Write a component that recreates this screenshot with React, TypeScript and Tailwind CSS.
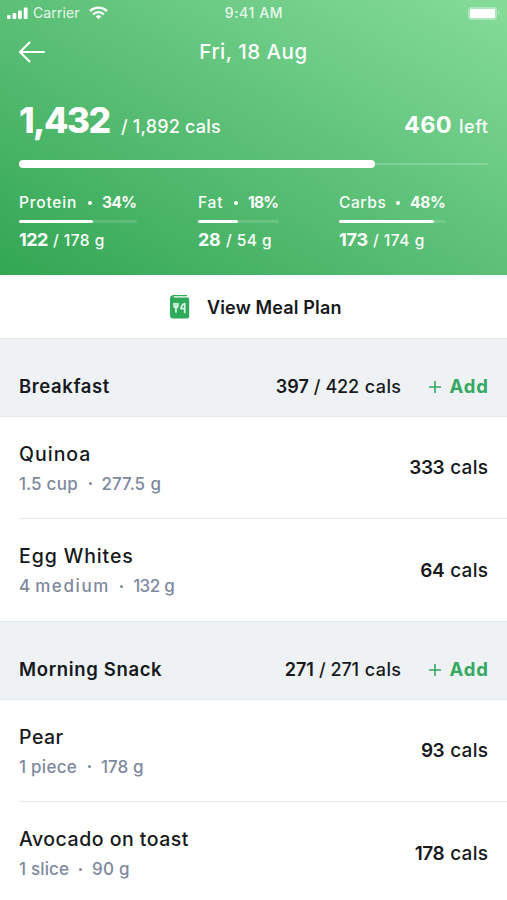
type Macro = {
  name: string;
  percent: string;
  value: string;
  goal: string;
  box: string;
  track: string;
  progress: number;
  nameClass: string;
  percentClass: string;
  valueClass: string;
  goalClass: string;
};

type Food = {
  name: string;
  nameClass: string;
  amount: string;
  unit: string;
  unitClass: string;
  grams: string;
  gramsClass: string;
  cals: string;
};

type Meal = {
  name: string;
  nameClass: string;
  eaten: string;
  goal: string;
  foods: Food[];
};

const macros: Macro[] = [
  {
    name: "Protein",
    percent: "34%",
    value: "122",
    goal: "178 g",
    box: "w-[179px]",
    track: "w-[118px]",
    progress: 63,
    nameClass: "w-[59px] tracking-[0.8px]",
    percentClass: "tracking-[-0.6px]",
    valueClass: "w-[29px] tracking-[-0.5px]",
    goalClass: "tracking-[0.5px]",
  },
  {
    name: "Fat",
    percent: "18%",
    value: "28",
    goal: "54 g",
    box: "w-[141px]",
    track: "w-[81px]",
    progress: 49,
    nameClass: "w-[26px] tracking-[0.8px]",
    percentClass: "tracking-[-0.7px]",
    valueClass: "w-[23px] tracking-[-0.3px]",
    goalClass: "tracking-[0.5px]",
  },
  {
    name: "Carbs",
    percent: "48%",
    value: "173",
    goal: "174 g",
    box: "w-[149px]",
    track: "w-[107px]",
    progress: 89,
    nameClass: "w-[47px] tracking-[0.6px]",
    percentClass: "tracking-[-0.3px]",
    valueClass: "w-[29px] tracking-[-0.2px]",
    goalClass: "tracking-[0.6px]",
  },
];

const meals: Meal[] = [
  {
    name: "Breakfast",
    nameClass: "tracking-[0.6px]",
    eaten: "397",
    goal: "422",
    foods: [
      {
        name: "Quinoa",
        nameClass: "tracking-[1px]",
        amount: "1.5",
        unit: "cup",
        unitClass: "w-[32px] tracking-[0.4px]",
        grams: "277.5",
        gramsClass: "w-[45px] tracking-[0px]",
        cals: "333",
      },
      {
        name: "Egg Whites",
        nameClass: "tracking-[0.9px]",
        amount: "4",
        unit: "medium",
        unitClass: "w-[75px] tracking-[1.6px]",
        grams: "132",
        gramsClass: "w-[27px] tracking-[-0.6px]",
        cals: "64",
      },
    ],
  },
  {
    name: "Morning Snack",
    nameClass: "tracking-[0.65px]",
    eaten: "271",
    goal: "271",
    foods: [
      {
        name: "Pear",
        nameClass: "tracking-[0.5px]",
        amount: "1",
        unit: "piece",
        unitClass: "w-[47px] tracking-[0.3px]",
        grams: "178",
        gramsClass: "w-[28px] tracking-[-0.1px]",
        cals: "93",
      },
      {
        name: "Avocado on toast",
        nameClass: "tracking-[0.5px]",
        amount: "1",
        unit: "slice",
        unitClass: "w-[38px] tracking-[0.1px]",
        grams: "90",
        gramsClass: "w-[23px] tracking-[0.3px]",
        cals: "178",
      },
    ],
  },
];

function StatusBar() {
  return (
    <div className="grid h-[26px] grid-cols-3 items-center pr-[8px] pl-[7px] text-[14px] leading-none text-white/85">
      <div className="flex items-center">
        <svg width="21" height="12" viewBox="0 0 21 12" fill="white">
          <rect x="0" y="8" width="3.6" height="4" rx="1" />
          <rect x="5.5" y="6" width="3.8" height="6" rx="1" />
          <rect x="11" y="3.5" width="3.8" height="8.5" rx="1" />
          <rect x="16.8" y="0.5" width="3.8" height="11.5" rx="1" />
        </svg>
        <span className="ml-[5px] w-[47px] tracking-[0.1px]">Carrier</span>
        <svg className="ml-[9px]" width="19" height="14" viewBox="0 0 19 14" fill="none" stroke="white" strokeWidth="2.3">
          <path d="M1 5.1C5.8.5 13.2.5 18 5.1" />
          <path d="M4.1 8.3c3-2.9 7.8-2.9 10.8 0" />
          <path d="M9.5 13.2 6.6 10.3c1.6-1.5 4.2-1.5 5.8 0Z" fill="white" stroke="none" />
        </svg>
      </div>
      <span className="pl-[2px] text-center font-medium tracking-[0.6px]">9:41 AM</span>
      <div className="flex items-center justify-end gap-[1px]">
        <div className="rounded-[3px] bg-white/35 p-[2px]">
          <div className="h-[9px] w-[25px] rounded-[1px] bg-white" />
        </div>
        <div className="h-[4px] w-[1.5px] rounded-r bg-white/40" />
      </div>
    </div>
  );
}

function MacroColumn({ macro }: { macro: Macro }) {
  return (
    <div className={macro.box}>
      <div className="flex h-[20px] items-center text-[15.5px] font-medium">
        <span className={macro.nameClass}>{macro.name}</span>
        <span className="mx-[10px] size-[4px] rounded-full bg-white" />
        <span className={`font-bold ${macro.percentClass}`}>{macro.percent}</span>
      </div>
      <div className={`mt-[7px] h-[3px] rounded-full bg-white/15 ${macro.track}`}>
        <div className="h-full rounded-full bg-white" style={{ width: `${macro.progress}%` }} />
      </div>
      <div className="mt-[3px] flex h-[22px] items-baseline text-[15.5px] font-medium">
        <span className={`text-[18px] font-bold ${macro.valueClass}`}>{macro.value}</span>
        <span className="mx-[5px]">/</span>
        <span className={macro.goalClass}>{macro.goal}</span>
      </div>
    </div>
  );
}

function Summary() {
  return (
    <header className="h-[275px] bg-[linear-gradient(to_top_right,#32a653,#5cc077_50%,#85dc99)] text-white">
      <StatusBar />
      <div className="grid h-[52px] grid-cols-[1fr_auto_1fr] items-center px-[19px]">
        <svg width="27" height="22" viewBox="0 0 27 22" fill="none" stroke="white" strokeWidth="2" strokeLinecap="round" strokeLinejoin="round">
          <path d="M25 11H1M10.5 1.5 1 11l9.5 9.5" />
        </svg>
        <span className="pt-[1px] text-[20.5px] font-medium tracking-[0.5px]">Fri, 18 Aug</span>
      </div>
      <div className="mt-[21px] flex h-[44px] items-baseline px-[19px] text-[18px] font-medium">
        <span className="w-[92px] text-[35.5px] leading-[44px] font-extrabold tracking-[-1.6px]">1,432</span>
        <span className="ml-[10px] tracking-[0.2px]">/ 1,892 cals</span>
        <span className="ml-auto text-[23.5px] font-bold tracking-[0.4px]">460</span>
        <span className="mr-[-0.5px] ml-[7px] tracking-[0.5px]">left</span>
      </div>
      <div className="mx-[19px] mt-[17px] flex h-[8px] items-center">
        <div className="h-[8px] w-[356px] rounded-full bg-white" />
        <div className="h-[2px] flex-1 rounded-r-full bg-white/20" />
      </div>
      <div className="mt-[25px] flex pl-[19px]">
        {macros.map((macro) => (
          <MacroColumn key={macro.name} macro={macro} />
        ))}
      </div>
    </header>
  );
}

function MealPlanLink() {
  return (
    <button className="flex h-[63px] w-full items-center pt-[1px] pl-[170px] text-[18px] font-semibold">
      <svg width="20" height="24" viewBox="0 0 20 24" fill="none">
        <path d="M3.5 0H17v1.3H4.2c-.8 0-.8 1.1 0 1.1H17.5c1 0 1.7.7 1.7 1.7V21.5c0 1.2-.8 2-2 2H3c-1.700 0-3-1.200-3-3V3.500C0 1.500 1.500 0 3.500 0Z" fill="#2fa95b" />
        <path d="M4 8.500v2c0 1.300.8 2 1.900 2s2-.7 2-2v-2M5.950 8.500v8.500M14.700 17.500V8.500c-2.300 1.100-3.700 3-3.700 5.200h3.700" stroke="#d9f5e2" strokeWidth="1.700" strokeLinecap="round" strokeLinejoin="round" />
      </svg>
      <span className="ml-[17px] tracking-[0.15px]">View Meal Plan</span>
    </button>
  );
}

function FoodRow({ food, last }: { food: Food; last: boolean }) {
  return (
    <div className={`ml-[19px] flex h-[102px] items-center justify-between pt-[1px] pr-[19px] ${last ? "" : "border-b border-[#e8eaed]"}`}>
      <div>
        <div className={`text-[19.5px] leading-[26px] font-[450] ${food.nameClass}`}>{food.name}</div>
        <div className="mt-[5px] flex items-center text-[17px] leading-[24px] font-[450] text-[#7e899e]">
          <span className="font-medium">{food.amount}</span>
          <span className={`ml-[5px] ${food.unitClass}`}>{food.unit}</span>
          <span className="mx-[10px] size-[3px] rounded-full bg-[#7e899e]" />
          <span className={`font-medium ${food.gramsClass}`}>{food.grams}</span>
          <span className="ml-[4px]">g</span>
        </div>
      </div>
      <div className="flex gap-[6px] pt-[1px] text-[19px] font-[450]">
        <span className="font-semibold tracking-[-0.5px]">{food.cals}</span>
        <span className="mr-[-0.3px] tracking-[0.3px]">cals</span>
      </div>
    </div>
  );
}

function MealSection({ meal }: { meal: Meal }) {
  return (
    <section>
      <div className="flex h-[79px] items-center border-y border-[#e3e7ea] bg-[#eef2f5] px-[19px] pt-[18px] text-[18px]">
        <h2 className={`text-[18.5px] font-semibold ${meal.nameClass}`}>{meal.name}</h2>
        <div className="ml-auto flex font-[450]">
          <span className="font-semibold">{meal.eaten}</span>
          <span className="mx-[5px]">/</span>
          <span className="tracking-[-0.2px]">{meal.goal}</span>
          <span className="ml-[6px] tracking-[0.4px]">cals</span>
        </div>
        <button className="mr-[-0.9px] ml-[28px] flex items-center gap-[8px] pt-[1px] text-[18.5px] font-bold tracking-[0.9px] text-[#35a961]">
          <svg width="12" height="12" viewBox="0 0 12 12" stroke="currentColor" strokeWidth="1.6">
            <path d="M6 0v12M0 6h12" />
          </svg>
          Add
        </button>
      </div>
      {meal.foods.map((food, index) => (
        <FoodRow key={food.name} food={food} last={index === meal.foods.length - 1} />
      ))}
    </section>
  );
}

export default function App() {
  return (
    <div className="h-[900px] w-[507px] overflow-hidden bg-white font-['Inter','Open_Sans',sans-serif] text-[#17191c]">
      <Summary />
      <MealPlanLink />
      {meals.map((meal) => (
        <MealSection key={meal.name} meal={meal} />
      ))}
    </div>
  );
}
